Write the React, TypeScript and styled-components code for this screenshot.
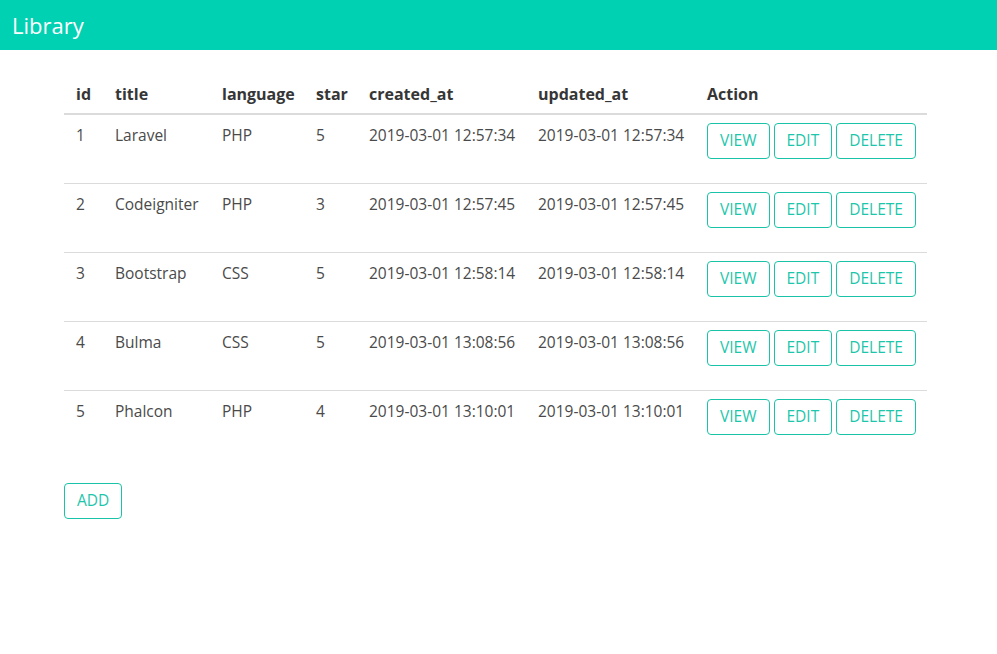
import React from "react";
import styled, { createGlobalStyle } from "styled-components";

const GlobalStyle = createGlobalStyle`
  html, body {
    margin: 0;
    padding: 0;
    background: #fff;
    font-family: "Open Sans", "Noto Sans", Arial, sans-serif;
    font-size: 16px;
    color: #4a4a4a;
  }
`;

interface Lib {
  id: number;
  title: string;
  language: string;
  star: number;
  created_at: string;
  updated_at: string;
}

const libraries: Lib[] = [
  { id: 1, title: "Laravel", language: "PHP", star: 5, created_at: "2019-03-01 12:57:34", updated_at: "2019-03-01 12:57:34" },
  { id: 2, title: "Codeigniter", language: "PHP", star: 3, created_at: "2019-03-01 12:57:45", updated_at: "2019-03-01 12:57:45" },
  { id: 3, title: "Bootstrap", language: "CSS", star: 5, created_at: "2019-03-01 12:58:14", updated_at: "2019-03-01 12:58:14" },
  { id: 4, title: "Bulma", language: "CSS", star: 5, created_at: "2019-03-01 13:08:56", updated_at: "2019-03-01 13:08:56" },
  { id: 5, title: "Phalcon", language: "PHP", star: 4, created_at: "2019-03-01 13:10:01", updated_at: "2019-03-01 13:10:01" },
];

const columns = [
  { key: "id", label: "id", width: 39 },
  { key: "title", label: "title", width: 107 },
  { key: "language", label: "language", width: 94 },
  { key: "star", label: "star", width: 53 },
  { key: "created_at", label: "created_at", width: 169 },
  { key: "updated_at", label: "updated_at", width: 169 },
];

const App = () => (
  <>
    <GlobalStyle />
    <Navbar>
      <Brand>Library</Brand>
    </Navbar>
    <Content>
      <Table>
        <colgroup>
          {columns.map((c) => (
            <col key={c.key} style={{ width: c.width }} />
          ))}
          <col style={{ width: 232 }} />
        </colgroup>
        <thead>
          <tr>
            {columns.map((c) => (
              <Th key={c.key}>{c.label}</Th>
            ))}
            <Th>Action</Th>
          </tr>
        </thead>
        <tbody>
          {libraries.map((lib) => (
            <Row key={lib.id}>
              <Td>{lib.id}</Td>
              <Td>{lib.title}</Td>
              <Td>{lib.language}</Td>
              <Td>{lib.star}</Td>
              <Td>{lib.created_at}</Td>
              <Td>{lib.updated_at}</Td>
              <Td>
                <Buttons>
                  <OutlineButton>VIEW</OutlineButton>
                  <OutlineButton>EDIT</OutlineButton>
                  <OutlineButton>DELETE</OutlineButton>
                </Buttons>
              </Td>
            </Row>
          ))}
        </tbody>
      </Table>
      <OutlineButton>ADD</OutlineButton>
    </Content>
  </>
);

const Navbar = styled.nav`
  height: 50px;
  background: #00d1b2;
  display: flex;
  align-items: center;
  padding: 0 12px;
`;

const Brand = styled.span`
  color: #fff;
  font-size: 22px;
  line-height: 1;
`;

const Content = styled.main`
  width: 863px;
  margin: 0 64px;
  padding-top: 23px;
`;

const Table = styled.table`
  width: 863px;
  table-layout: fixed;
  border-collapse: collapse;
  border-spacing: 0;
  margin-bottom: 24px;
`;

const Th = styled.th`
  text-align: left;
  font-weight: 700;
  color: #363636;
  padding: 9px 12px 7px;
  line-height: 24px;
  border-bottom: 2px solid #dbdbdb;
  white-space: nowrap;
`;

const Row = styled.tr`
  &:not(:last-child) td {
    border-bottom: 1px solid #dbdbdb;
  }
`;

const Td = styled.td`
  vertical-align: top;
  padding: 8px 12px 0;
  height: 60px;
  line-height: 24px;
  font-size: 15.5px;
  color: #4a4a4a;
  white-space: nowrap;
`;

const Buttons = styled.div`
  display: flex;
  gap: 4px;
`;

const OutlineButton = styled.button`
  font-family: inherit;
  font-size: 15.5px;
  height: 36px;
  padding: 0 12px;
  background: #fff;
  color: #1cc6ab;
  border: 1px solid #19c3a8;
  border-radius: 4px;
  cursor: pointer;
  line-height: 1;
`;

export default App;
